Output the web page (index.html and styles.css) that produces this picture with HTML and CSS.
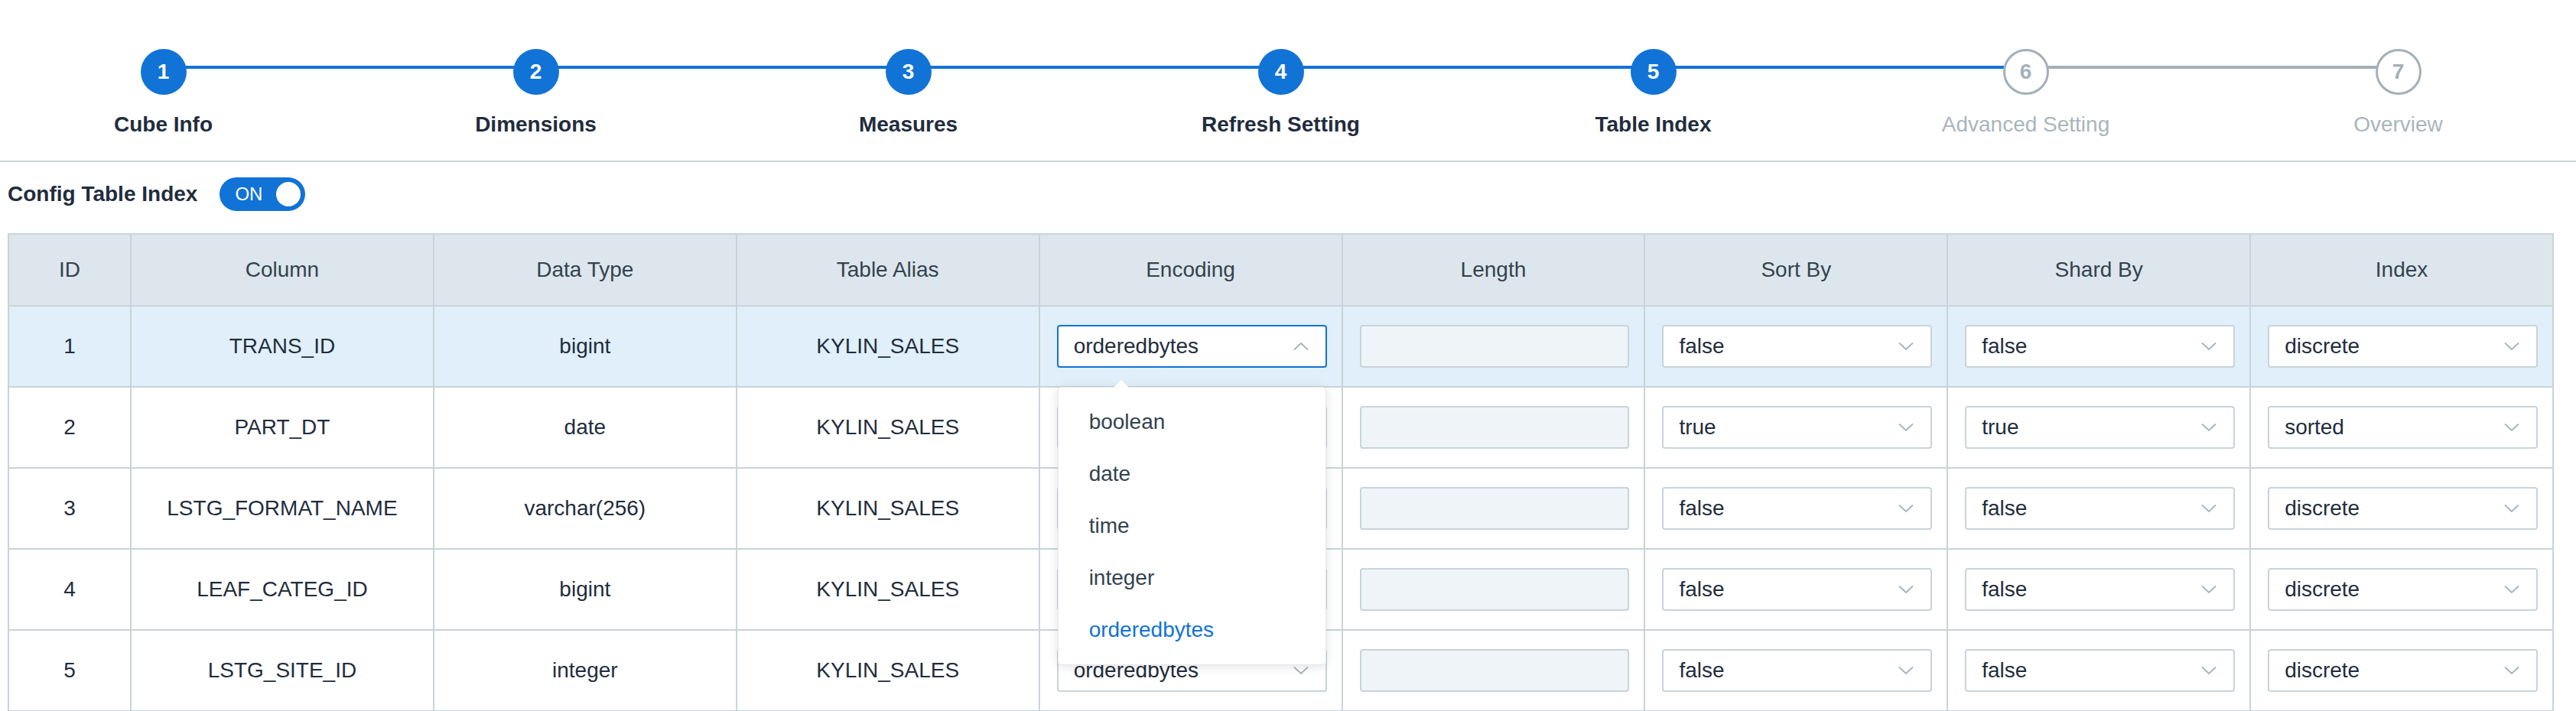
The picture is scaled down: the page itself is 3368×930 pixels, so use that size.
FILE: index.html
```html
<!DOCTYPE html>
<html lang="en">
<head>
<meta charset="utf-8">
<title>Table Index</title>
<link rel="stylesheet" href="styles.css">
</head>
<body>
<div class="steps-bar">
  <div class="steps">
    <div class="step"><div class="step-icon">1</div><div class="step-title">Cube Info</div></div>
    <div class="step"><div class="step-icon">2</div><div class="step-title">Dimensions</div></div>
    <div class="step"><div class="step-icon">3</div><div class="step-title">Measures</div></div>
    <div class="step"><div class="step-icon">4</div><div class="step-title">Refresh Setting</div></div>
    <div class="step"><div class="step-icon">5</div><div class="step-title">Table Index</div></div>
    <div class="step wait"><div class="step-icon">6</div><div class="step-title">Advanced Setting</div></div>
    <div class="step wait last"><div class="step-icon">7</div><div class="step-title">Overview</div></div>
  </div>
</div>

<div class="config">
  <span class="config-label">Config Table Index</span>
  <span class="switch"><span class="switch-text">ON</span><span class="switch-knob"></span></span>
</div>

<div class="grid">
  <div class="row head">
    <div class="cell">ID</div>
    <div class="cell">Column</div>
    <div class="cell">Data Type</div>
    <div class="cell">Table Alias</div>
    <div class="cell">Encoding</div>
    <div class="cell">Length</div>
    <div class="cell">Sort By</div>
    <div class="cell">Shard By</div>
    <div class="cell">Index</div>
  </div>

  <div class="row active">
    <div class="cell">1</div>
    <div class="cell">TRANS_ID</div>
    <div class="cell">bigint</div>
    <div class="cell">KYLIN_SALES</div>
    <div class="cell ctl">
      <div class="select focus"><span>orderedbytes</span>
        <svg class="chev" viewBox="0 0 20 10" width="20" height="10"><path d="M1 9.5 L10 1 L19 9.5" fill="none" stroke="#a3b2bb" stroke-width="1.8"/></svg>
        <ul class="dropdown">
          <li class="option">boolean</li>
          <li class="option">date</li>
          <li class="option">time</li>
          <li class="option">integer</li>
          <li class="option selected">orderedbytes</li>
        </ul>
      </div>
    </div>
    <div class="cell ctl"><div class="input"></div></div>
    <div class="cell ctl"><div class="select"><span>false</span><svg class="chev" viewBox="0 0 20 10" width="20" height="10"><path d="M1 0.5 L10 9 L19 0.5" fill="none" stroke="#a3b2bb" stroke-width="1.8"/></svg></div></div>
    <div class="cell ctl"><div class="select"><span>false</span><svg class="chev" viewBox="0 0 20 10" width="20" height="10"><path d="M1 0.5 L10 9 L19 0.5" fill="none" stroke="#a3b2bb" stroke-width="1.8"/></svg></div></div>
    <div class="cell ctl"><div class="select"><span>discrete</span><svg class="chev" viewBox="0 0 20 10" width="20" height="10"><path d="M1 0.5 L10 9 L19 0.5" fill="none" stroke="#a3b2bb" stroke-width="1.8"/></svg></div></div>
  </div>

  <div class="row">
    <div class="cell">2</div>
    <div class="cell">PART_DT</div>
    <div class="cell">date</div>
    <div class="cell">KYLIN_SALES</div>
    <div class="cell ctl"><div class="select"><span></span><svg class="chev" viewBox="0 0 20 10" width="20" height="10"><path d="M1 0.5 L10 9 L19 0.5" fill="none" stroke="#a3b2bb" stroke-width="1.8"/></svg></div></div>
    <div class="cell ctl"><div class="input"></div></div>
    <div class="cell ctl"><div class="select"><span>true</span><svg class="chev" viewBox="0 0 20 10" width="20" height="10"><path d="M1 0.5 L10 9 L19 0.5" fill="none" stroke="#a3b2bb" stroke-width="1.8"/></svg></div></div>
    <div class="cell ctl"><div class="select"><span>true</span><svg class="chev" viewBox="0 0 20 10" width="20" height="10"><path d="M1 0.5 L10 9 L19 0.5" fill="none" stroke="#a3b2bb" stroke-width="1.8"/></svg></div></div>
    <div class="cell ctl"><div class="select"><span>sorted</span><svg class="chev" viewBox="0 0 20 10" width="20" height="10"><path d="M1 0.5 L10 9 L19 0.5" fill="none" stroke="#a3b2bb" stroke-width="1.8"/></svg></div></div>
  </div>

  <div class="row">
    <div class="cell">3</div>
    <div class="cell">LSTG_FORMAT_NAME</div>
    <div class="cell">varchar(256)</div>
    <div class="cell">KYLIN_SALES</div>
    <div class="cell ctl"><div class="select"><span></span><svg class="chev" viewBox="0 0 20 10" width="20" height="10"><path d="M1 0.5 L10 9 L19 0.5" fill="none" stroke="#a3b2bb" stroke-width="1.8"/></svg></div></div>
    <div class="cell ctl"><div class="input"></div></div>
    <div class="cell ctl"><div class="select"><span>false</span><svg class="chev" viewBox="0 0 20 10" width="20" height="10"><path d="M1 0.5 L10 9 L19 0.5" fill="none" stroke="#a3b2bb" stroke-width="1.8"/></svg></div></div>
    <div class="cell ctl"><div class="select"><span>false</span><svg class="chev" viewBox="0 0 20 10" width="20" height="10"><path d="M1 0.5 L10 9 L19 0.5" fill="none" stroke="#a3b2bb" stroke-width="1.8"/></svg></div></div>
    <div class="cell ctl"><div class="select"><span>discrete</span><svg class="chev" viewBox="0 0 20 10" width="20" height="10"><path d="M1 0.5 L10 9 L19 0.5" fill="none" stroke="#a3b2bb" stroke-width="1.8"/></svg></div></div>
  </div>

  <div class="row">
    <div class="cell">4</div>
    <div class="cell">LEAF_CATEG_ID</div>
    <div class="cell">bigint</div>
    <div class="cell">KYLIN_SALES</div>
    <div class="cell ctl"><div class="select"><span></span><svg class="chev" viewBox="0 0 20 10" width="20" height="10"><path d="M1 0.5 L10 9 L19 0.5" fill="none" stroke="#a3b2bb" stroke-width="1.8"/></svg></div></div>
    <div class="cell ctl"><div class="input"></div></div>
    <div class="cell ctl"><div class="select"><span>false</span><svg class="chev" viewBox="0 0 20 10" width="20" height="10"><path d="M1 0.5 L10 9 L19 0.5" fill="none" stroke="#a3b2bb" stroke-width="1.8"/></svg></div></div>
    <div class="cell ctl"><div class="select"><span>false</span><svg class="chev" viewBox="0 0 20 10" width="20" height="10"><path d="M1 0.5 L10 9 L19 0.5" fill="none" stroke="#a3b2bb" stroke-width="1.8"/></svg></div></div>
    <div class="cell ctl"><div class="select"><span>discrete</span><svg class="chev" viewBox="0 0 20 10" width="20" height="10"><path d="M1 0.5 L10 9 L19 0.5" fill="none" stroke="#a3b2bb" stroke-width="1.8"/></svg></div></div>
  </div>

  <div class="row">
    <div class="cell">5</div>
    <div class="cell">LSTG_SITE_ID</div>
    <div class="cell">integer</div>
    <div class="cell">KYLIN_SALES</div>
    <div class="cell ctl"><div class="select"><span>orderedbytes</span><svg class="chev" viewBox="0 0 20 10" width="20" height="10"><path d="M1 0.5 L10 9 L19 0.5" fill="none" stroke="#a3b2bb" stroke-width="1.8"/></svg></div></div>
    <div class="cell ctl"><div class="input"></div></div>
    <div class="cell ctl"><div class="select"><span>false</span><svg class="chev" viewBox="0 0 20 10" width="20" height="10"><path d="M1 0.5 L10 9 L19 0.5" fill="none" stroke="#a3b2bb" stroke-width="1.8"/></svg></div></div>
    <div class="cell ctl"><div class="select"><span>false</span><svg class="chev" viewBox="0 0 20 10" width="20" height="10"><path d="M1 0.5 L10 9 L19 0.5" fill="none" stroke="#a3b2bb" stroke-width="1.8"/></svg></div></div>
    <div class="cell ctl"><div class="select"><span>discrete</span><svg class="chev" viewBox="0 0 20 10" width="20" height="10"><path d="M1 0.5 L10 9 L19 0.5" fill="none" stroke="#a3b2bb" stroke-width="1.8"/></svg></div></div>
  </div>
</div>
</body>
</html>
```

FILE: styles.css
```css
* { box-sizing: border-box; }
html, body { margin: 0; padding: 0; }
body {
  width: 3368px;
  height: 930px;
  overflow: hidden;
  background: #fff;
  font-family: "Liberation Sans", Arial, Helvetica, sans-serif;
  color: #1f2d3d;
}

/* Steps */
.steps-bar {
  height: 212px;
  padding-top: 64px;
  border-bottom: 2px solid #c9d4d8;
  overflow: hidden;
}
.steps {
  display: flex;
  margin-left: -30px;
}
.step {
  flex: 0 0 487px;
  display: flex;
  flex-direction: column;
  align-items: center;
  position: relative;
}
.step::after {
  content: "";
  position: absolute;
  top: 22px;
  left: 50%;
  width: 487px;
  height: 4px;
  background: #1273d6;
}
.step.wait::after { background: #a3b0b9; }
.step.last::after { display: none; }
.step-icon {
  position: relative;
  z-index: 1;
  width: 60px;
  height: 60px;
  border-radius: 50%;
  background: #1273d6;
  color: #fff;
  font-size: 28px;
  font-weight: bold;
  display: flex;
  align-items: center;
  justify-content: center;
}
.wait .step-icon {
  background: #fff;
  border: 3px solid #a3b0b9;
  color: #a3b0b9;
}
.step-title {
  margin-top: 22px;
  font-size: 28px;
  line-height: 34px;
  font-weight: bold;
  color: #1f2d3d;
  white-space: nowrap;
}
.wait .step-title {
  font-weight: normal;
  color: #a9b5bd;
}

/* Config row */
.config {
  display: flex;
  align-items: center;
  gap: 29px;
  height: 64px;
  padding: 20px 0 0 10px;
  margin-bottom: 29px;
}
.config-label {
  font-size: 28px;
  font-weight: bold;
  color: #1f2d3d;
}
.switch {
  width: 112px;
  height: 44px;
  border-radius: 22px;
  background: #1273d6;
  display: flex;
  align-items: center;
  justify-content: space-between;
  padding: 0 6px 0 20px;
}
.switch-text {
  color: #fff;
  font-size: 24px;
}
.switch-knob {
  width: 32px;
  height: 32px;
  border-radius: 50%;
  background: #fff;
}

/* Table */
.grid {
  margin-left: 10px;
  width: 3329px;
  border-left: 2px solid #c8d4d9;
  border-top: 2px solid #c8d4d9;
}
.row {
  display: grid;
  grid-template-columns: 160px repeat(8, 1fr);
}
.cell {
  height: 106px;
  border-right: 2px solid #c8d4d9;
  border-bottom: 2px solid #c8d4d9;
  display: flex;
  align-items: center;
  justify-content: center;
  font-size: 28px;
  color: #1f2d3d;
  white-space: nowrap;
}
.head .cell {
  height: 94px;
  background: #dde6ec;
  color: #33434f;
}
.active .cell { background: #e0eff9; }
.cell.ctl {
  justify-content: stretch;
  padding: 0 19px 0 22px;
}

.select {
  position: relative;
  width: 100%;
  height: 56px;
  border: 2px solid #c8d4d9;
  border-radius: 4px;
  background: #fff;
  display: flex;
  align-items: center;
  justify-content: space-between;
  padding: 0 22px 0 20px;
  font-size: 28px;
  color: #1f2d3d;
}
.select.focus { border-color: #1273d6; }
.chev { display: block; flex: none; }
.input {
  width: 100%;
  height: 56px;
  border: 2px solid #c8d4d9;
  border-radius: 4px;
  background: #eef4f7;
}

/* Dropdown */
.dropdown {
  position: absolute;
  top: 79px;
  left: -1px;
  width: 351px;
  margin: 0;
  padding: 11px 0;
  list-style: none;
  background: #fff;
  border: 1px solid #e4e7ed;
  border-radius: 4px;
  box-shadow: 0 2px 14px rgba(0, 0, 0, 0.12);
  z-index: 10;
}
.dropdown::before {
  content: "";
  position: absolute;
  top: -10px;
  left: 72px;
  border-left: 10px solid transparent;
  border-right: 10px solid transparent;
  border-bottom: 10px solid #fff;
}
.option {
  height: 68px;
  line-height: 68px;
  padding-left: 40px;
  font-size: 28px;
  color: #33434f;
}
.option.selected { color: #1273d6; }
```
